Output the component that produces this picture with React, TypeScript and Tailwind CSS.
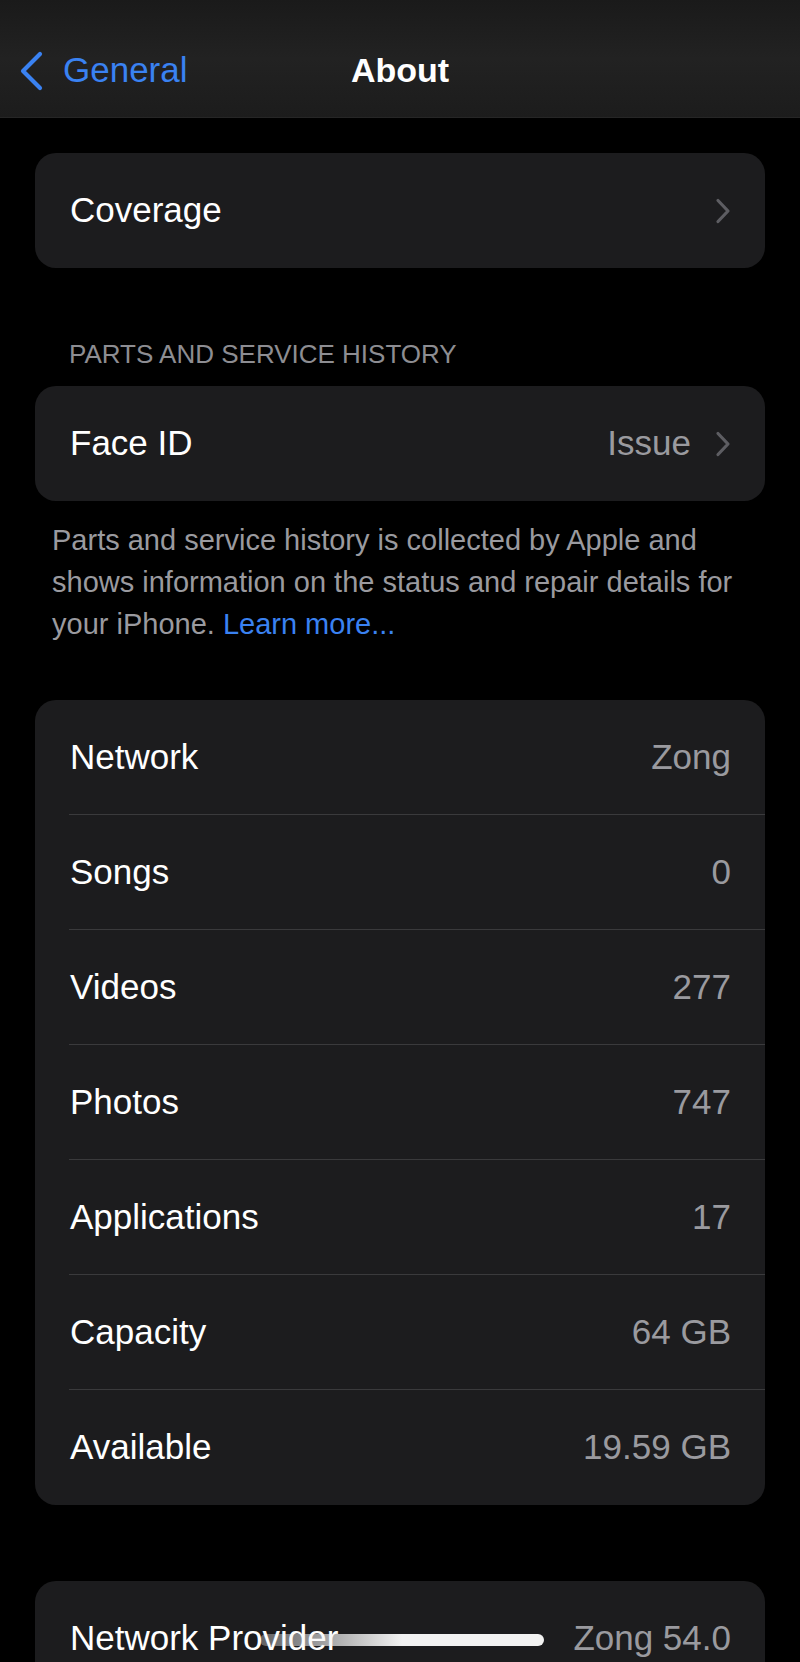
import React from "react"

function Chevron() {
  return (
    <svg width="16" height="26" viewBox="0 0 16 26" className="shrink-0">
      <path d="M3 2.5 L13 13 L3 23.5" fill="none" stroke="#5d5d62" strokeWidth="3.2" strokeLinecap="round" strokeLinejoin="round" />
    </svg>
  )
}

function Row({ label, value, chevron, divider }: { label: string; value?: string; chevron?: boolean; divider?: boolean }) {
  return (
    <div className="relative flex h-[115px] items-center pl-[35px] pr-[34px]">
      <span className="flex-1 text-white">{label}</span>
      {value && <span className="text-[#9a9a9f]">{value}</span>}
      {chevron && <span className={value ? "ml-[24px]" : ""}><Chevron /></span>}
      {divider && <div className="absolute bottom-0 left-[34px] right-0 h-px bg-[#3a3a3c]" />}
    </div>
  )
}

export default function App() {
  const info = [
    { label: "Network", value: "Zong" },
    { label: "Songs", value: "0" },
    { label: "Videos", value: "277" },
    { label: "Photos", value: "747" },
    { label: "Applications", value: "17" },
    { label: "Capacity", value: "64 GB" },
    { label: "Available", value: "19.59 GB" },
  ]

  return (
    <div
      className="relative h-[1662px] w-full overflow-hidden bg-black text-[35px]"
      style={{ fontFamily: '"Liberation Sans", Arial, sans-serif' }}
    >
      {/* Nav bar */}
      <div className="relative flex h-[118px] items-center border-b border-[#262626] bg-gradient-to-b from-[#1a1a1a] via-[#222222] to-[#1c1c1c] pt-[24px]">
        <div className="flex items-center pl-[19px] text-[#3a82f2]">
          <svg width="24" height="40" viewBox="0 0 24 40">
            <path d="M21 3 L4 20 L21 37" fill="none" stroke="#3a82f2" strokeWidth="4.2" strokeLinecap="round" strokeLinejoin="round" />
          </svg>
          <span className="ml-[20px]">General</span>
        </div>
        <div className="absolute inset-0 flex items-center justify-center pt-[24px] text-[34px] font-bold text-white">About</div>
      </div>

      <div className="px-[35px] pt-[35px]">
        {/* Coverage */}
        <div className="overflow-hidden rounded-[21px] bg-[#1c1c1e]">
          <Row label="Coverage" chevron />
        </div>

        <div className="mt-[71px] mb-[17px] pl-[34px] text-[26px] leading-[30px] text-[#8d8d92]">PARTS AND SERVICE HISTORY</div>

        <div className="overflow-hidden rounded-[21px] bg-[#1c1c1e]">
          <Row label="Face ID" value="Issue" chevron />
        </div>

        <p className="mt-[18px] px-[17px] text-[29px] leading-[42px] text-[#9a9a9f]">
          Parts and service history is collected by Apple and shows information on the status and repair details for your iPhone.{" "}
          <span className="text-[#3a82f2]">Learn more...</span>
        </p>

        {/* Info */}
        <div className="mt-[55px] overflow-hidden rounded-[21px] bg-[#1c1c1e]">
          {info.map((r, i) => (
            <Row key={r.label} label={r.label} value={r.value} divider={i < info.length - 1} />
          ))}
        </div>

        <div className="mt-[76px] overflow-hidden rounded-[21px] bg-[#1c1c1e]">
          <Row label="Network Provider" value="Zong 54.0" />
        </div>
      </div>

      {/* Home indicator */}
      <div className="absolute bottom-[16px] left-[260px] h-[12px] w-[284px] rounded-full bg-gradient-to-r from-white/30 via-[#f2f2f2] to-[#f2f2f2]" />
    </div>
  )
}
